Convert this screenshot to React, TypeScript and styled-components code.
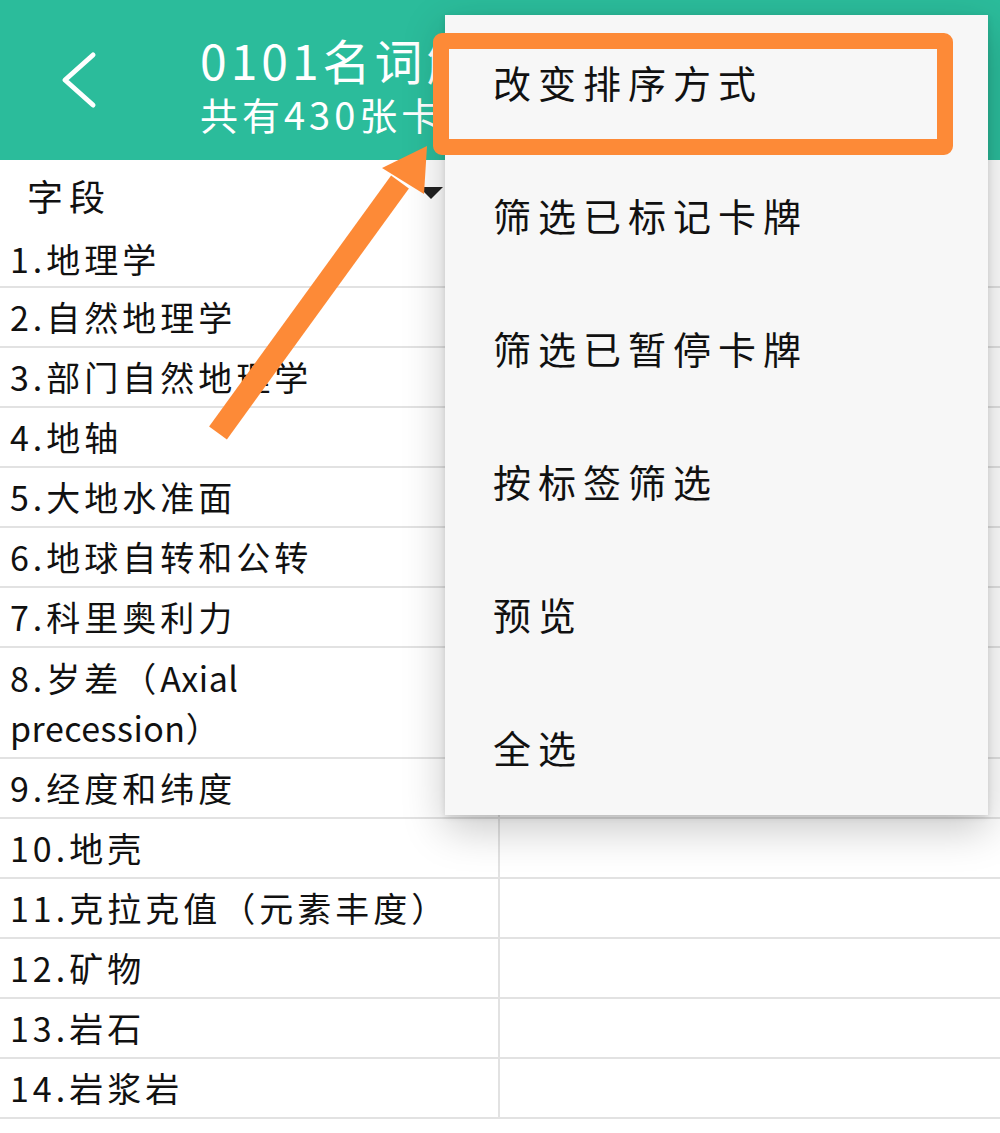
import React from "react";
import styled, { createGlobalStyle } from "styled-components";

const GlobalStyle = createGlobalStyle`
  html, body {
    margin: 0;
    padding: 0;
    background: #ffffff;
  }
  body {
    font-family: "Noto Sans CJK SC", "Noto Sans", sans-serif;
  }
`;

const Page = styled.div`
  position: relative;
  width: 1000px;
  height: 1133px;
  overflow: hidden;
  background: #ffffff;
  color: #111;
`;

const Header = styled.div`
  display: flex;
  align-items: center;
  height: 160px;
  background: #2bbc9b;
  color: #fff;
`;

const BackButton = styled.div`
  display: flex;
  align-items: center;
  justify-content: center;
  width: 160px;
  height: 100%;
`;

const TitleBlock = styled.div`
  display: flex;
  flex-direction: column;
  margin-left: 40px;
  padding-top: 6px;
`;

const Title = styled.div`
  font-size: 48px;
  line-height: 58px;
  letter-spacing: 4px;
  white-space: nowrap;
`;

const Subtitle = styled.div`
  margin-top: 4px;
  font-size: 38px;
  line-height: 44px;
  letter-spacing: 4px;
  white-space: nowrap;
`;

const Table = styled.div`
  display: flex;
  flex-direction: column;
`;

const Row = styled.div`
  display: grid;
  grid-template-columns: 500px 1fr;
  border-bottom: 2px solid #e2e2e2;
`;

const Cell = styled.div<{ $tall?: boolean }>`
  display: flex;
  align-items: center;
  min-height: ${(p) => (p.$tall ? 109 : 58)}px;
  padding: 0 10px;
  border-right: 2px solid #e2e2e2;
  font-size: 34px;
  line-height: 50px;
  letter-spacing: 4px;
`;

const Latin = styled.span`
  letter-spacing: 0.5px;
`;

const FieldHeader = styled.div`
  display: flex;
  flex-direction: column;
  width: 498px;
  border-right: 2px solid #e2e2e2;
`;

const FieldTitle = styled.div`
  display: flex;
  align-items: center;
  justify-content: space-between;
  height: 70px;
  padding: 0 55px 0 27px;
  font-size: 36px;
  letter-spacing: 6px;
`;

const SortMark = styled.div`
  width: 0;
  height: 0;
  border-left: 12px solid transparent;
  border-right: 12px solid transparent;
  border-top: 12px solid #222;
  margin-top: -4px;
`;

const FirstItem = styled.div`
  display: flex;
  align-items: center;
  height: 56px;
  padding: 0 10px;
  font-size: 34px;
  letter-spacing: 4px;
`;

const Menu = styled.div`
  position: absolute;
  left: 445px;
  top: 15px;
  width: 543px;
  height: 800px;
  background: #f7f7f7;
  box-shadow: 0 14px 40px rgba(0, 0, 0, 0.22), 0 2px 6px rgba(0, 0, 0, 0.12);
  display: flex;
  flex-direction: column;
`;

const MenuItem = styled.div`
  display: flex;
  align-items: center;
  height: 133px;
  padding-left: 48px;
  font-size: 38px;
  letter-spacing: 7px;
  color: #111;
`;

const Highlight = styled.div`
  position: absolute;
  left: 433px;
  top: 33px;
  width: 520px;
  height: 122px;
  box-sizing: border-box;
  border: 16px solid #fd8a37;
  border-radius: 9px;
`;

const ArrowLayer = styled.svg`
  position: absolute;
  left: 0;
  top: 0;
  pointer-events: none;
`;

const rows: { text: React.ReactNode; tall?: boolean }[] = [
  { text: "2.自然地理学" },
  { text: "3.部门自然地理学" },
  { text: "4.地轴" },
  { text: "5.大地水准面" },
  { text: "6.地球自转和公转" },
  { text: "7.科里奥利力" },
  {
    text: (
      <span>
        8.岁差（<Latin>Axial</Latin>
        <br />
        <Latin>precession</Latin>）
      </span>
    ),
    tall: true,
  },
  { text: "9.经度和纬度" },
  { text: "10.地壳" },
  { text: "11.克拉克值（元素丰度）" },
  { text: "12.矿物" },
  { text: "13.岩石" },
  { text: "14.岩浆岩" },
];

const menuItems = [
  "改变排序方式",
  "筛选已标记卡牌",
  "筛选已暂停卡牌",
  "按标签筛选",
  "预览",
  "全选",
];

export default function App() {
  return (
    <Page>
      <GlobalStyle />
      <Header>
        <BackButton>
          <svg width="40" height="60" viewBox="0 0 40 60">
            <polyline
              points="33,5 5,30 33,55"
              fill="none"
              stroke="#fff"
              strokeWidth="5"
              strokeLinecap="round"
              strokeLinejoin="round"
            />
          </svg>
        </BackButton>
        <TitleBlock>
          <Title>0101名词解释</Title>
          <Subtitle>共有430张卡牌</Subtitle>
        </TitleBlock>
      </Header>

      <Table>
        <Row>
          <FieldHeader>
            <FieldTitle>
              <span>字段</span>
              <SortMark />
            </FieldTitle>
            <FirstItem>1.地理学</FirstItem>
          </FieldHeader>
          <div />
        </Row>
        {rows.map((r, i) => (
          <Row key={i}>
            <Cell $tall={r.tall}>{r.text}</Cell>
            <div />
          </Row>
        ))}
      </Table>

      <Menu>
        {menuItems.map((m) => (
          <MenuItem key={m}>{m}</MenuItem>
        ))}
      </Menu>

      <Highlight />

      <ArrowLayer width="1000" height="1133" viewBox="0 0 1000 1133">
        <line x1="218" y1="433" x2="400" y2="182" stroke="#fd8a37" strokeWidth="22" />
        <polygon points="427,146 382,168 424,194" fill="#fd8a37" />
      </ArrowLayer>
    </Page>
  );
}
